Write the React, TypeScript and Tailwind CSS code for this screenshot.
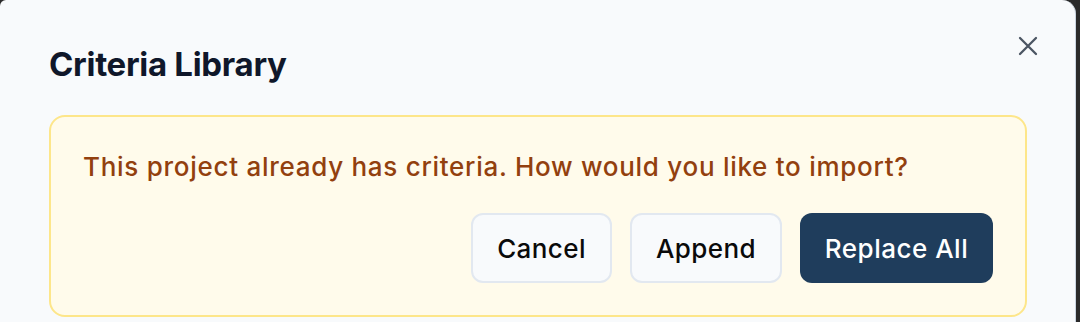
import React from "react";

export default function App() {
  return (
    <div
      className="w-[1080px] h-[322px] bg-[#2b2b2b] overflow-hidden flex"
      style={{ fontFamily: "Inter, 'Noto Sans', sans-serif" }}
    >
      <div className="relative w-[1076px] h-[360px] bg-[#f8fafc] rounded-tr-[14px] rounded-tl-[6px] border-r border-[#cbd5e1] pl-[49px] pr-[49px] pt-[44px]">
        <button className="absolute right-[37px] top-[36px] text-[#4b5563]" aria-label="Close">
          <svg width="20" height="20" viewBox="0 0 20 20" fill="none" stroke="currentColor" strokeWidth="2.3" strokeLinecap="round">
            <path d="M2 2L18 18M18 2L2 18" />
          </svg>
        </button>
        <h2 className="text-[33px] leading-[40px] font-bold text-[#0f172a] tracking-[-0.3px]">Criteria Library</h2>
        <div className="mt-[31px] w-[978px] rounded-[16px] border-2 border-[#fde68a] bg-[#fffbeb] p-[32px]">
          <p className="text-[26px] leading-[36px] font-medium text-[#92400e] tracking-[0.72px] whitespace-nowrap">
            This project already has criteria. How would you like to import?
          </p>
          <div className="mt-[28px] flex justify-end gap-[18px]">
            <button className="h-[70px] w-[141px] rounded-[12px] border-2 border-[#e2e8f0] bg-[#f8fafc] text-[26px] font-medium text-[#0a0a0a] tracking-[0.4px]">
              Cancel
            </button>
            <button className="h-[70px] w-[152px] rounded-[12px] border-2 border-[#e2e8f0] bg-[#f8fafc] text-[26px] font-medium text-[#0a0a0a] tracking-[0.4px]">
              Append
            </button>
            <button className="h-[70px] w-[193px] rounded-[12px] bg-[#1f3d5c] text-[26px] font-medium text-white tracking-[0.5px]">
              Replace All
            </button>
          </div>
        </div>
      </div>
    </div>
  );
}
